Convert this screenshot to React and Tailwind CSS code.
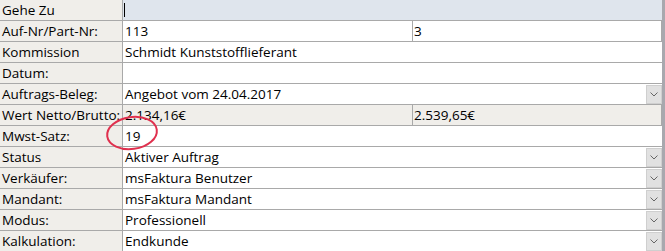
import React from "react";

const font = { fontFamily: '"Open Sans", "Liberation Sans", sans-serif' };

function Chevron() {
  return (
    <div className="w-[16px] h-[19px] mt-[1px] mb-auto flex items-center justify-center bg-[#e1e1e1] border border-[#cfcfcf]">
      <svg width="8" height="5" viewBox="0 0 8 5">
        <path d="M0.5 0.5 L4 4 L7.5 0.5" fill="none" stroke="#666" strokeWidth="1" />
      </svg>
    </div>
  );
}

const rows = [
  { label: "Gehe Zu", type: "goto" },
  { label: "Auf-Nr/Part-Nr:", type: "split", a: "113", b: "3" },
  { label: "Kommission", value: "Schmidt Kunststofflieferant" },
  { label: "Datum:", value: "" },
  { label: "Auftrags-Beleg:", value: "Angebot vom 24.04.2017", combo: true },
  { label: "Wert Netto/Brutto:", type: "split", a: "2.134,16€", b: "2.539,65€", grey: true },
  { label: "Mwst-Satz:", value: "19" },
  { label: "Status", value: "Aktiver Auftrag", combo: true },
  { label: "Verkäufer:", value: "msFaktura Benutzer", combo: true },
  { label: "Mandant:", value: "msFaktura Mandant", combo: true },
  { label: "Modus:", value: "Professionell", combo: true },
  { label: "Kalkulation:", value: "Endkunde", combo: true },
];

function Row({ row }) {
  return (
    <div className="flex h-[21px] border-b border-[#a9a9a9] text-[13.5px] leading-[20px] text-black">
      <div className="w-[123px] shrink-0 bg-[#f0eeea] border-r border-[#a9a9a9] pl-[2px] whitespace-nowrap overflow-hidden">
        {row.label}
      </div>
      {row.type === "goto" && (
        <div className="flex-1 bg-[#dfe5ed] pl-[1px] pt-[3px]">
          <div className="w-[1px] h-[14px] bg-black" />
        </div>
      )}
      {row.type === "split" && (
        <div className={`flex flex-1 border-r border-[#a9a9a9] ${row.grey ? "bg-[#f0eeea]" : "bg-white"}`}>
          <div className="w-[290px] border-r border-[#a9a9a9] pl-[2px]">{row.a}</div>
          <div className="flex-1 pl-[1px]">{row.b}</div>
        </div>
      )}
      {!row.type && (
        <div className="flex flex-1 bg-white">
          <div className="flex-1 pl-[2px] whitespace-nowrap">{row.value}</div>
          {row.combo && <Chevron />}
        </div>
      )}
    </div>
  );
}

export default function App() {
  return (
    <div className="relative w-[665px] h-[251px] overflow-hidden flex bg-white" style={font}>
      <div className="w-[662px] shrink-0">
        {rows.map((r) => (
          <Row key={r.label} row={r} />
        ))}
      </div>
      <div className="flex-1 bg-[#a8a8ae]" />
      {/* red annotation circle */}
      <svg className="absolute left-0 top-0 pointer-events-none" width="665" height="251">
        <ellipse cx="132" cy="133" rx="25" ry="16" transform="rotate(-8 132 133)" fill="none" stroke="#e0304e" strokeWidth="2" />
      </svg>
    </div>
  );
}
